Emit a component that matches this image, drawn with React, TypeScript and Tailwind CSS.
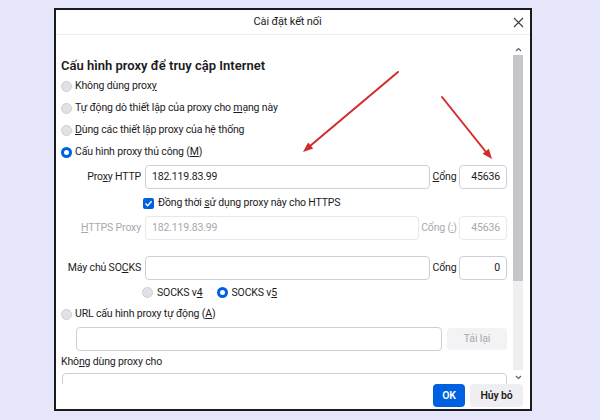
import React from 'react';

function Radio({ checked }: { checked?: boolean }) {
  return checked ? (
    <span className="w-[11px] h-[11px] rounded-full border-[3px] border-[#0061e0] bg-white shrink-0" />
  ) : (
    <span className="w-[11px] h-[11px] rounded-full border border-[#cfcfd6] bg-[#e2e2e6] shrink-0" />
  );
}

function Field({ value, width, disabled, align = 'left' }: { value?: string; width: string; disabled?: boolean; align?: 'left' | 'right' }) {
  return (
    <div
      className={`${width} h-[24px] rounded-[4px] border flex items-center px-[6px] shrink-0 ${
        disabled ? 'border-[#e8e8ec] text-[#a8a8b0]' : 'border-[#cfcfd8] text-[#1c1b22]'
      } ${align === 'right' ? 'justify-end' : ''}`}
    >
      {value}
    </div>
  );
}

export default function App() {
  return (
    <div className="relative w-[600px] h-[420px] bg-[#e6e6fa] pl-[54px] pt-[8px] font-['Roboto',sans-serif] text-[10.5px] tracking-[-0.15px] text-[#1c1b22]">
      <div className="w-[478px] h-[403px] border-2 border-[#1b1b1f] bg-white flex flex-col">
        {/* Title bar */}
        <div className="h-[25px] border-b border-[#ececef] flex items-center shrink-0">
          <div className="flex-1 text-center text-[11px] pl-[6px]">Cài đặt kết nối</div>
          <svg width="11" height="11" viewBox="0 0 11 11" className="mr-[6px]">
            <path d="M1 1 L10 10 M10 1 L1 10" stroke="#3a3a3f" strokeWidth="1.1" />
          </svg>
        </div>

        {/* Body */}
        <div className="h-[349px] flex overflow-hidden shrink-0">
          <div className="flex-1 pl-[5px] pr-[6px] pt-[22px]">
            <div className="h-[18px] flex items-center text-[13px] tracking-normal font-semibold">Cấu hình proxy để truy cập Internet</div>

            <div className="h-[22px] flex items-center gap-[3px]">
              <Radio />
              <span>Không dùng prox<u>y</u></span>
            </div>
            <div className="h-[22px] flex items-center gap-[3px]">
              <Radio />
              <span>Tự động dò thiết lập của proxy cho <u>m</u>ạng này</span>
            </div>
            <div className="h-[22px] flex items-center gap-[3px]">
              <Radio />
              <span><u>D</u>ùng các thiết lập proxy của hệ thống</span>
            </div>
            <div className="h-[22px] flex items-center gap-[3px]">
              <Radio checked />
              <span>Cấu hình proxy thủ công (<u>M</u>)</span>
            </div>

            {/* Proxy HTTP */}
            <div className="mt-[2px] flex items-center">
              <div className="w-[80px] text-right">Pro<u>x</u>y HTTP</div>
              <div className="w-[4px]" />
              <Field value="182.119.83.99" width="w-[285px]" />
              <div className="w-[29px] text-center"><u>C</u>ổng</div>
              <Field value="45636" width="w-[48px]" align="right" />
            </div>

            <div className="mt-[3px] h-[22px] flex items-center pl-[82px] gap-[4px]">
              <span className="w-[11px] h-[11px] rounded-[2px] bg-[#0061e0] flex items-center justify-center">
                <svg width="9" height="9" viewBox="0 0 9 9">
                  <path d="M1.5 4.6 L3.6 6.7 L7.6 2.2" fill="none" stroke="white" strokeWidth="1.4" />
                </svg>
              </span>
              <span>Đồng thời <u>s</u>ử dụng proxy này cho HTTPS</span>
            </div>

            {/* HTTPS */}
            <div className="mt-[2px] flex items-center text-[#a8a8b0]">
              <div className="w-[80px] text-right"><u>H</u>TTPS Proxy</div>
              <div className="w-[4px]" />
              <Field value="182.119.83.99" width="w-[274px]" disabled />
              <div className="w-[40px] text-center">Cổng (<u>:</u>)</div>
              <Field value="45636" width="w-[48px]" align="right" disabled />
            </div>

            {/* SOCKS */}
            <div className="mt-[16px] flex items-center">
              <div className="w-[80px] text-right">Máy chủ SO<u>C</u>KS</div>
              <div className="w-[4px]" />
              <Field width="w-[285px]" />
              <div className="w-[29px] text-center">Cổng</div>
              <Field value="0" width="w-[48px]" align="right" />
            </div>

            <div className="mt-[2px] h-[21px] flex items-center pl-[81px] gap-[4px]">
              <Radio />
              <span>SOCKS v<u>4</u></span>
              <span className="w-[6px]" />
              <Radio checked />
              <span>SOCKS v<u>5</u></span>
            </div>

            <div className="h-[22px] flex items-center gap-[3px]">
              <Radio />
              <span>URL cấu hình proxy tự động (<u>A</u>)</span>
            </div>

            <div className="mt-[2px] flex items-center pl-[15px] gap-[5px]">
              <Field width="w-[366px]" />
              <div className="w-[60px] h-[22px] rounded-[4px] bg-[#f3f3f5] text-[#a8a8b0] flex items-center justify-center">Tải lại</div>
            </div>

            <div className="mt-[1px] h-[20px] flex items-center">Khô<u>n</u>g dùng proxy cho</div>
            <div className="mt-[1px] pl-[1px]">
              <Field width="w-[445px]" />
            </div>
          </div>

          {/* Scrollbar */}
          <div className="w-[10px] mr-[7px] mt-[8px] flex flex-col bg-[#efeff1]">
            <div className="h-[12px] flex items-center justify-center bg-white">
              <svg width="7" height="5" viewBox="0 0 7 5">
                <path d="M1 4 L3.5 1.5 L6 4" fill="none" stroke="#5b5b66" strokeWidth="1.1" />
              </svg>
            </div>
            <div className="h-[226px] bg-[#c6c6ca]" />
            <div className="flex-1" />
            <div className="h-[14px] flex items-center justify-center bg-white">
              <svg width="7" height="5" viewBox="0 0 7 5">
                <path d="M1 1 L3.5 3.5 L6 1" fill="none" stroke="#5b5b66" strokeWidth="1.1" />
              </svg>
            </div>
          </div>
        </div>

        {/* Footer */}
        <div className="h-[25px] flex justify-end items-start gap-[5px] pr-[7px] shrink-0">
          <button className="w-[32px] h-[23px] rounded-[4px] bg-[#0061e0] text-white font-semibold text-[10.5px]">OK</button>
          <button className="w-[53px] h-[23px] rounded-[4px] bg-[#efeff2] text-[#1c1b22] font-semibold text-[10.5px]">Hủy bỏ</button>
        </div>
      </div>

      {/* Red annotation arrows */}
      <svg className="absolute inset-0 pointer-events-none" width="600" height="420" viewBox="0 0 600 420">
        <line x1="398" y1="72" x2="310" y2="146" stroke="#d42a2a" strokeWidth="2" strokeLinecap="round" />
        <polygon points="303,152 313.2,148.6 308.1,142.5" fill="#d42a2a" />
        <line x1="442" y1="97" x2="486" y2="152" stroke="#d42a2a" strokeWidth="2" strokeLinecap="round" />
        <polygon points="492,159 482.6,153.7 488.8,148.7" fill="#d42a2a" />
      </svg>
    </div>
  );
}
